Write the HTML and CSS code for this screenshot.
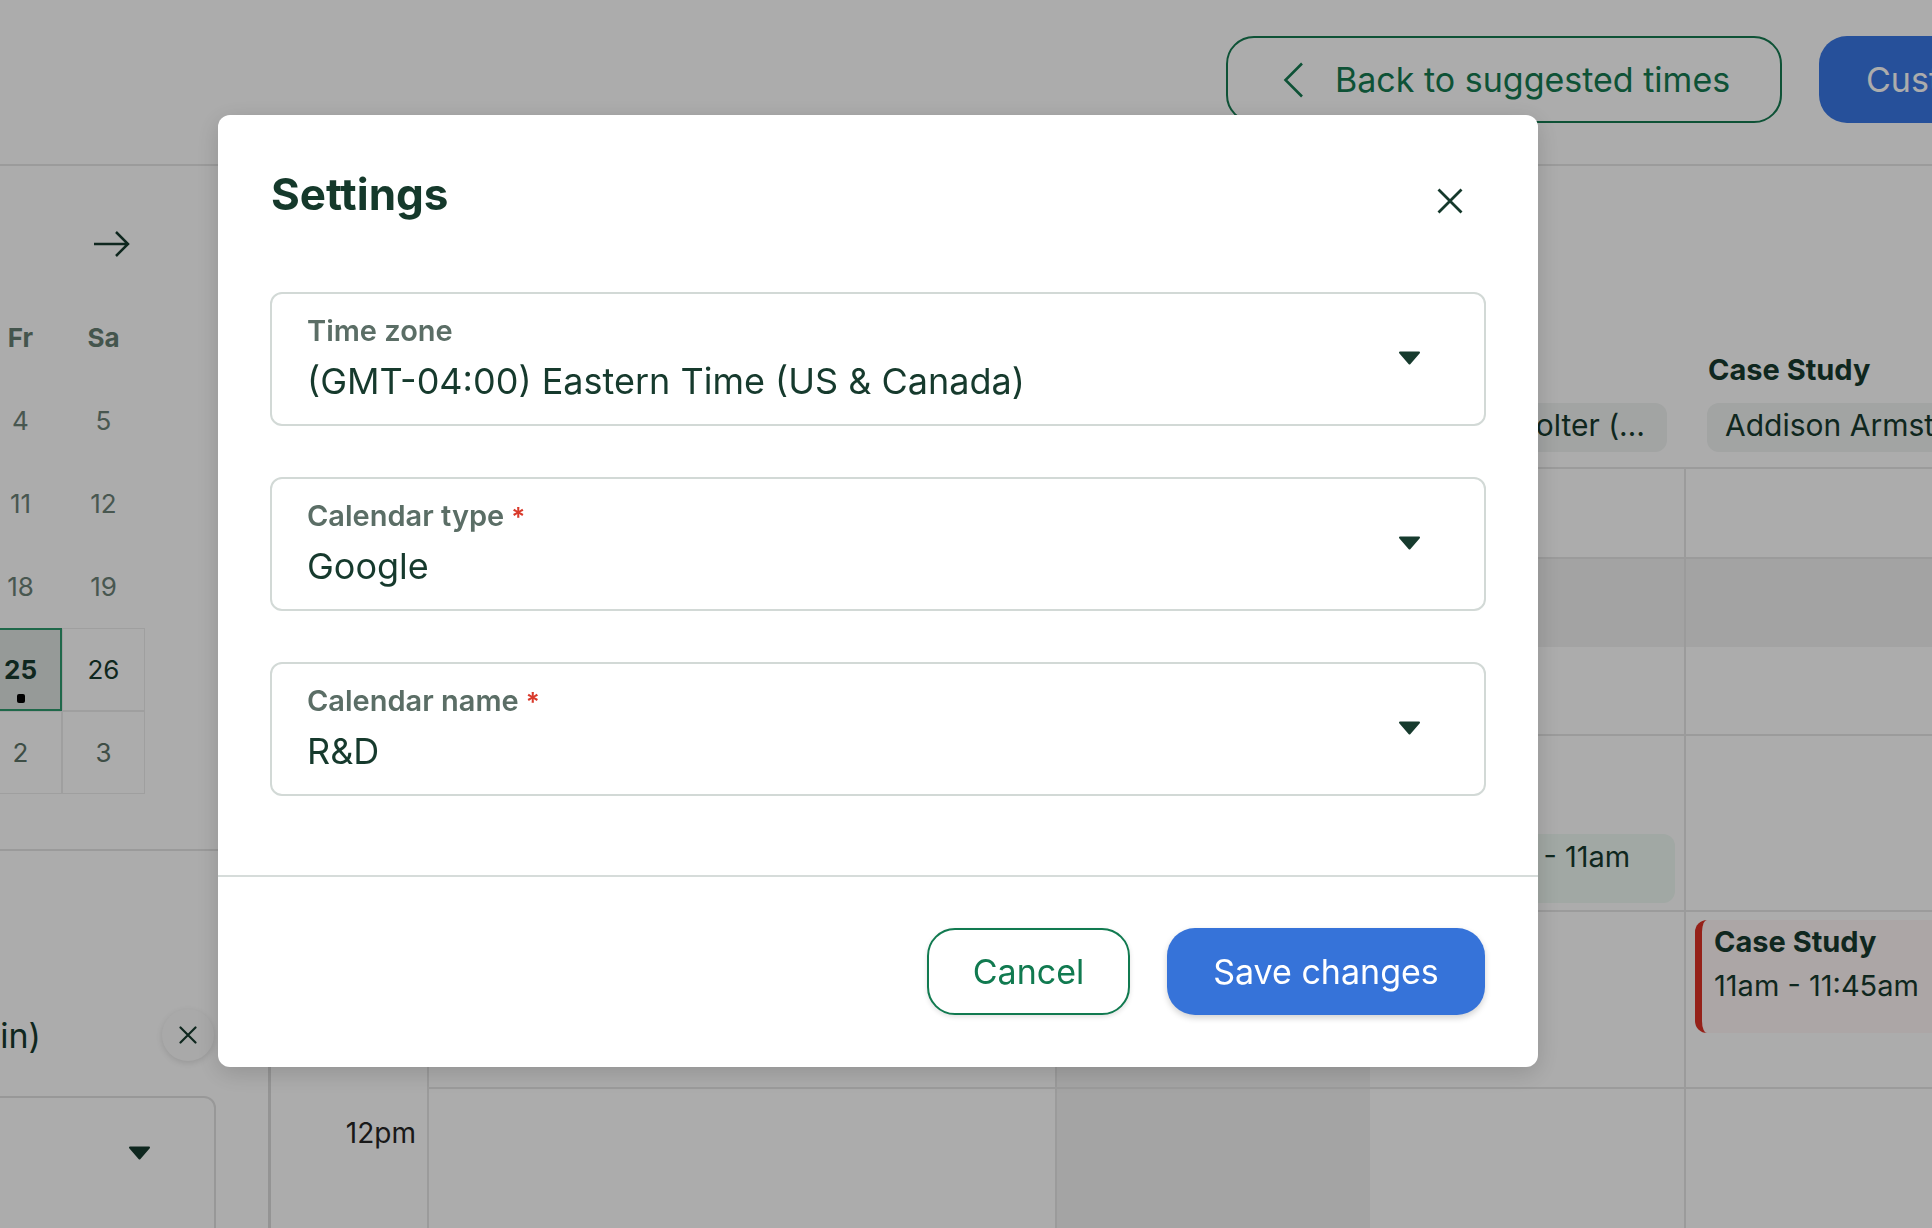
FILE: index.html
```html
<!DOCTYPE html>
<html lang="en">
<head>
<meta charset="utf-8">
<title>Settings</title>
<link rel="stylesheet" href="styles.css">
</head>
<body>
<div class="app">
  <header class="topbar">
    <button class="btn-back" type="button">
      <svg class="chev" viewBox="0 0 21 36" width="21" height="36"><path d="M19 1.5L2.5 18L19 34.5" fill="none" stroke="#157a51" stroke-width="2.6"/></svg>
      <span>Back to suggested times</span>
    </button>
    <button class="btn-cust" type="button">Custom time</button>
  </header>

  <aside class="sidebar">
    <section class="minical">
      <div class="mc-nav">
        <svg viewBox="0 0 37 28" width="37" height="28"><path d="M36 14H2M14 2L2 14l12 12" fill="none" stroke="#173b2e" stroke-width="2.5"/></svg>
        <span class="mc-month">April 2025</span>
        <svg viewBox="0 0 37 28" width="37" height="28"><path d="M1 14h34M23 2l12 12-12 12" fill="none" stroke="#173b2e" stroke-width="2.5"/></svg>
      </div>
      <div class="mc-grid">
        <span class="dow">Su</span><span class="dow">Mo</span><span class="dow">Tu</span><span class="dow">We</span><span class="dow">Th</span><span class="dow">Fr</span><span class="dow">Sa</span>
        <span class="day other">30</span><span class="day other">31</span><span class="day past">1</span><span class="day past">2</span><span class="day past">3</span><span class="day past">4</span><span class="day past">5</span>
        <span class="day past">6</span><span class="day past">7</span><span class="day past">8</span><span class="day past">9</span><span class="day past">10</span><span class="day past">11</span><span class="day past">12</span>
        <span class="day past">13</span><span class="day past">14</span><span class="day past">15</span><span class="day past">16</span><span class="day past">17</span><span class="day past">18</span><span class="day past">19</span>
        <span class="day past">20</span><span class="day past">21</span><span class="day past">22</span><span class="day past">23</span><span class="day past">24</span><span class="day open today">25</span><span class="day open">26</span>
        <span class="day open">27</span><span class="day open">28</span><span class="day open">29</span><span class="day open">30</span><span class="day open next">1</span><span class="day open next">2</span><span class="day open next">3</span>
      </div>
    </section>
    <section class="details">
      <div class="dur-row">
        <span class="dur-label">Interview (30 min)</span>
        <button class="round-x" type="button"><svg viewBox="0 0 18 18" width="18" height="18"><path d="M1.5 1.5l15 15M16.5 1.5l-15 15" stroke="#173b2e" stroke-width="2.2" stroke-linecap="round"/></svg></button>
      </div>
      <div class="side-select">
        <span class="side-select-val">Select interviewers</span>
        <svg class="tri" viewBox="0 0 23 14" width="23" height="14"><path d="M2 1.5h19L11.5 12.5z" fill="#173b2e" stroke="#173b2e" stroke-width="2" stroke-linejoin="round"/></svg>
      </div>
    </section>
  </aside>

  <main class="cal">
    <div class="cal-head">
      <div class="gutter-head"></div>
      <div class="col-head">
        <div class="col-title">Case Study</div>
        <div class="chip">Jordan Bennett (Interviewer)</div>
      </div>
      <div class="col-head">
        <div class="col-title">Case Study</div>
        <div class="chip chip-end">Samantha Bolter (…</div>
      </div>
      <div class="col-head">
        <div class="col-title">Case Study</div>
        <div class="chip">Addison Armstrong</div>
      </div>
    </div>
    <div class="cal-body">
      <div class="gut"></div><div class="slot"></div><div class="slot"></div><div class="slot"></div>
      <div class="gut"><span class="hour">9am</span></div><div class="slot band"></div><div class="slot band"></div><div class="slot band"></div>
      <div class="gut"><span class="hour">10am</span></div><div class="slot"></div>
      <div class="slot"><div class="ev ev-green">10:30am - 11am</div></div>
      <div class="slot"></div>
      <div class="gut"><span class="hour">11am</span></div><div class="slot"></div><div class="slot busy-end"></div>
      <div class="slot"><div class="ev ev-red"><div class="ev-title">Case Study</div><div class="ev-time">11am - 11:45am</div></div></div>
      <div class="gut"><span class="hour">12pm</span></div><div class="slot"></div><div class="slot busy"></div><div class="slot"></div>
    </div>
  </main>
</div>

<div class="overlay"></div>

<div class="modal" role="dialog" aria-labelledby="settings-title">
  <div class="modal-head">
    <h2 id="settings-title" class="modal-title">Settings</h2>
    <button class="modal-close" type="button" aria-label="Close">
      <svg viewBox="0 0 26 26" width="26" height="26"><path d="M1.5 1.5l23 23M24.5 1.5l-23 23" stroke="#15392b" stroke-width="2.8"/></svg>
    </button>
  </div>
  <div class="modal-body">
    <div class="field">
      <div class="field-text">
        <div class="field-label">Time zone</div>
        <div class="field-value">(GMT-04:00) Eastern Time (US &amp; Canada)</div>
      </div>
      <svg class="tri" viewBox="0 0 23 14" width="23" height="14"><path d="M2 1.5h19L11.5 12.5z" fill="#173b2e" stroke="#173b2e" stroke-width="2" stroke-linejoin="round"/></svg>
    </div>
    <div class="field">
      <div class="field-text">
        <div class="field-label">Calendar type<span class="req">*</span></div>
        <div class="field-value">Google</div>
      </div>
      <svg class="tri" viewBox="0 0 23 14" width="23" height="14"><path d="M2 1.5h19L11.5 12.5z" fill="#173b2e" stroke="#173b2e" stroke-width="2" stroke-linejoin="round"/></svg>
    </div>
    <div class="field">
      <div class="field-text">
        <div class="field-label">Calendar name<span class="req">*</span></div>
        <div class="field-value">R&amp;D</div>
      </div>
      <svg class="tri" viewBox="0 0 23 14" width="23" height="14"><path d="M2 1.5h19L11.5 12.5z" fill="#173b2e" stroke="#173b2e" stroke-width="2" stroke-linejoin="round"/></svg>
    </div>
  </div>
  <div class="modal-foot">
    <button class="btn-cancel" type="button">Cancel</button>
    <button class="btn-save" type="button">Save changes</button>
  </div>
</div>
</body>
</html>
```

FILE: styles.css
```css
* { box-sizing: border-box; }

html, body {
  margin: 0;
  padding: 0;
}

body {
  width: 1932px;
  height: 1228px;
  overflow: hidden;
  background: #ffffff;
  font-family: Inter, "Noto Sans", sans-serif;
  color: #173b2e;
}

button {
  font-family: inherit;
  cursor: pointer;
}

/* ---------- underlying page (horizontally scrolled) ---------- */
.app {
  display: grid;
  grid-template-columns: 731px 2044px;
  grid-template-rows: 166px 1062px;
  width: 2775px;
  height: 1228px;
  margin-left: -460px;
}

.topbar {
  grid-column: 1 / -1;
  display: flex;
  justify-content: flex-end;
  align-items: flex-start;
  gap: 37px;
  padding: 36px 166px 0 0;
  border-bottom: 2px solid #e6e6e6;
}

.btn-back {
  width: 556px;
  height: 87px;
  display: flex;
  align-items: center;
  gap: 31px;
  padding: 0 0 0 55px;
  background: #ffffff;
  border: 2px solid #157a51;
  border-radius: 28px;
  color: #157a51;
  font-size: 34px;
  white-space: nowrap;
}

.chev { flex: none; }

.btn-cust {
  width: 330px;
  height: 87px;
  padding: 0 0 0 47px;
  text-align: left;
  background: #3977e4;
  border: none;
  border-radius: 28px;
  color: #ffffff;
  font-size: 34px;
  white-space: nowrap;
}

/* ---------- sidebar ---------- */
.sidebar {
  display: flex;
  flex-direction: column;
  border-right: 3px solid #dcdcdc;
  overflow: hidden;
}

.minical {
  flex: none;
  padding: 38px 52px 55px 24px;
  border-bottom: 2px solid #e4e4e4;
}

.mc-nav {
  width: 581px;
  height: 80px;
  margin-bottom: 12px;
  padding-right: 15px;
  display: flex;
  align-items: center;
  justify-content: space-between;
}

.mc-month {
  font-size: 28px;
  font-weight: 600;
}

.mc-grid {
  width: 581px;
  display: grid;
  grid-template-columns: repeat(7, 83px);
  grid-auto-rows: 83px;
}

.dow, .day {
  display: flex;
  align-items: center;
  justify-content: center;
  font-size: 26px;
  position: relative;
}

.dow {
  font-weight: 700;
  color: #667e72;
}

.day.past, .day.other { color: #6c8277; }
.day.open {
  color: #173b2e;
  border: 1px solid #ececec;
}
.day.next { color: #5d7468; }

.day.today {
  font-weight: 700;
  background: #dee4e1;
  border: 2px solid #2e9a6e;
}

.day.today::after {
  content: "";
  position: absolute;
  left: 50%;
  bottom: 6px;
  width: 8px;
  height: 9px;
  margin-left: -4px;
  border-radius: 2px;
  background: #000000;
}

.details {
  flex: none;
  padding: 158px 52px 0 24px;
}

.dur-row {
  height: 52px;
  display: flex;
  justify-content: flex-end;
  align-items: center;
  gap: 121px;
}

.dur-label {
  font-size: 34px;
  white-space: nowrap;
}

.round-x {
  width: 52px;
  height: 52px;
  margin-right: 2px;
  border: none;
  border-radius: 50%;
  background: #fbfbfb;
  box-shadow: 0 2px 6px rgba(0, 0, 0, 0.12);
  display: flex;
  align-items: center;
  justify-content: center;
  padding: 0;
}

.side-select {
  margin-top: 35px;
  height: 160px;
  border: 2px solid #e2e2e2;
  border-radius: 12px;
  display: flex;
  align-items: flex-start;
  justify-content: space-between;
  padding: 48px 63px 0 35px;
}

.side-select-val {
  font-size: 34px;
  line-height: 18px;
  color: #6c8277;
}

/* ---------- calendar ---------- */
.cal {
  display: flex;
  flex-direction: column;
  overflow: hidden;
}

.cal-head {
  flex: none;
  height: 303px;
  display: grid;
  grid-template-columns: 158px 628px 629px 629px;
  border-bottom: 2px solid #e6e6e6;
}

.col-head {
  display: flex;
  flex-direction: column;
  justify-content: flex-end;
  padding: 0 19px 15px 21px;
  min-width: 0;
}

.col-title {
  font-size: 29px;
  line-height: 36px;
  font-weight: 700;
  margin: 0 0 15px 1px;
  white-space: nowrap;
}

.chip {
  height: 49px;
  padding: 0 22px 4px 18px;
  border-radius: 12px;
  background: #f0f3f2;
  font-size: 30px;
  line-height: 45px;
  white-space: nowrap;
  overflow: hidden;
}

.chip-end { text-align: right; }

.cal-body {
  flex: none;
  display: grid;
  grid-template-columns: 158px 628px 629px 629px;
  grid-template-rows: 90px 176.5px 176.5px 176.5px 300px;
}

.gut {
  border-right: 2px solid #e6e6e6;
  text-align: right;
  padding: 27px 11px 0 0;
}

.hour {
  font-size: 28px;
  line-height: 34px;
  color: #262626;
}

.slot {
  position: relative;
  border-right: 2px solid #e6e6e6;
  border-bottom: 2px solid #e6e6e6;
}

.slot.band {
  background: linear-gradient(#f2f2f2 0 88px, transparent 88px);
}

.slot.busy-end {
  background: linear-gradient(#f4f4f4, #f4f4f4) left bottom / 313px 90px no-repeat;
}

.slot.busy {
  background: linear-gradient(#f4f4f4, #f4f4f4) left top / 313px 100% no-repeat;
}

.ev {
  position: absolute;
  border-radius: 12px;
  font-size: 29px;
  white-space: nowrap;
  overflow: hidden;
}

.ev-green {
  top: 98px;
  left: 343px;
  right: 9px;
  height: 69px;
  padding: 5px 19px;
  line-height: 36px;
  background: #eff9f3;
}

.ev-red {
  top: 8px;
  left: 9px;
  width: 600px;
  height: 113px;
  padding: 3px 19px 0 12px;
  background: #fff6f6;
  border-left: 7px solid #dd3225;
}

.ev-title {
  font-weight: 700;
  line-height: 38px;
}

.ev-time {
  line-height: 50px;
}

/* ---------- overlay + modal ---------- */
.overlay {
  position: fixed;
  inset: 0;
  background: rgba(0, 0, 0, 0.325);
  z-index: 10;
}

.modal {
  position: fixed;
  left: 218px;
  top: 115px;
  width: 1320px;
  background: #ffffff;
  border-radius: 12px;
  box-shadow: 0 6px 24px rgba(0, 0, 0, 0.16);
  z-index: 11;
}

.modal-head {
  display: flex;
  justify-content: space-between;
  align-items: flex-start;
  padding: 50px 52px 0 53px;
}

.modal-title {
  margin: 2px 0 0;
  font-size: 44px;
  line-height: 54px;
  font-weight: 700;
  color: #15392b;
}

.modal-close {
  width: 72px;
  height: 72px;
  padding: 0;
  border: none;
  background: transparent;
  display: flex;
  align-items: center;
  justify-content: center;
}

.modal-body {
  display: flex;
  flex-direction: column;
  gap: 51px;
  padding: 55px 52px 79px;
}

.field {
  display: flex;
  align-items: center;
  justify-content: space-between;
  padding: 19px 63px 21px 35px;
  border: 2px solid #d2d9d6;
  border-radius: 12px;
}

.field-label {
  font-size: 29px;
  line-height: 36px;
  font-weight: 600;
  color: #5b6e66;
  margin-bottom: 10px;
}

.req {
  color: #d93a2b;
  font-size: 26px;
  line-height: 20px;
  vertical-align: baseline;
  margin-left: 7px;
}

.field-value {
  font-size: 36px;
  line-height: 44px;
  color: #163a2d;
}

.tri { flex: none; }

.modal-foot {
  display: flex;
  justify-content: flex-end;
  gap: 37px;
  padding: 51px 53px 52px;
  border-top: 2px solid #d6dcda;
}

.btn-cancel,
.btn-save {
  height: 87px;
  border-radius: 28px;
  font-size: 34px;
  padding: 0;
}

.btn-cancel {
  width: 203px;
  background: #ffffff;
  border: 2px solid #117a50;
  color: #117a50;
  box-shadow: 0 2px 5px rgba(0, 0, 0, 0.12);
}

.btn-save {
  width: 318px;
  background: #3673d9;
  border: none;
  color: #ffffff;
  box-shadow: 0 3px 6px rgba(0, 0, 0, 0.18);
}
```
